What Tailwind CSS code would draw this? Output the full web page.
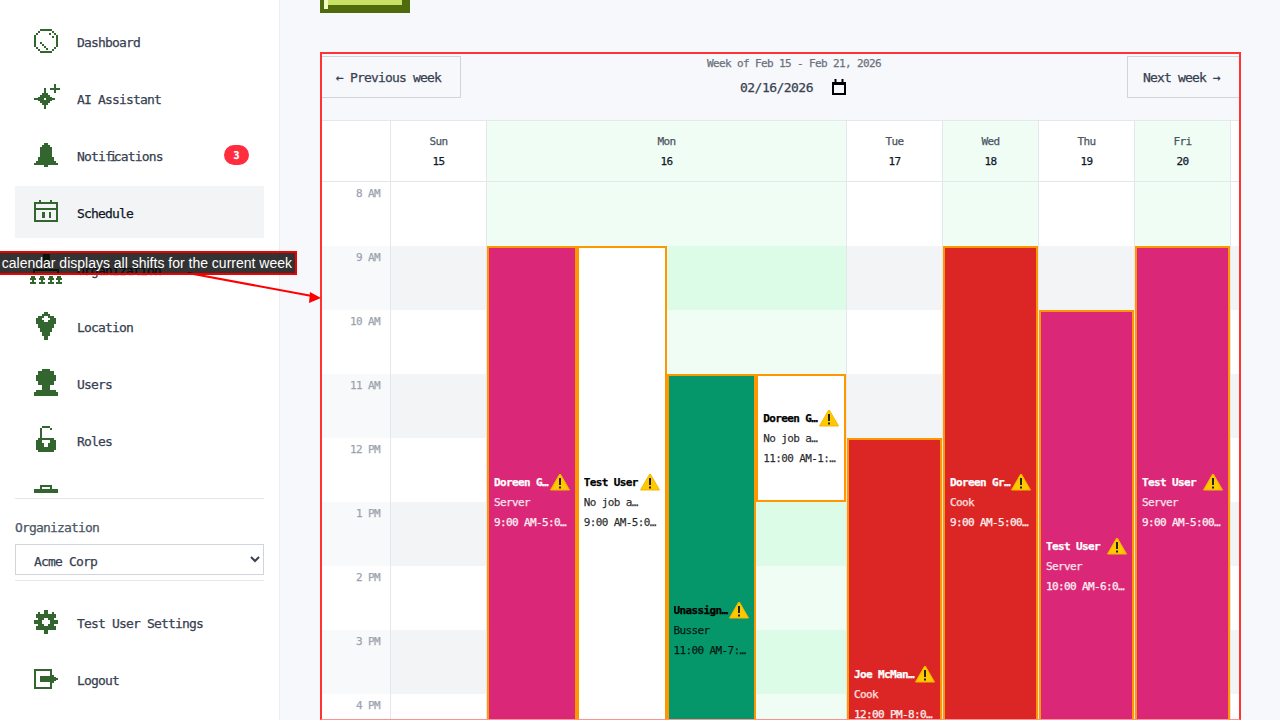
<!DOCTYPE html>
<html lang="en">
<head>
    <meta charset="UTF-8">
    <meta name="viewport" content="width=device-width, initial-scale=1.0">
    <title>Schedule</title>
    <script src="https://cdn.jsdelivr.net/npm/@tailwindcss/browser@4"></script>
</head>
<body class="relative flex w-[1280px] h-[720px] overflow-hidden bg-[#f7f8fb] font-['DejaVu_Sans_Mono',monospace] text-[13px] tracking-[-0.83px] text-[#374151] [-webkit-text-stroke:0.25px]">

    <!-- Sidebar -->
    <aside class="flex flex-col w-[280px] h-[720px] shrink-0 bg-white border-r border-[#eceef2] px-[15px]">
        <nav class="flex flex-col gap-[5px] h-[493px] shrink-0 overflow-hidden pt-[15px]">
            <a class="flex items-center h-[52px] shrink-0 pl-[19px] gap-[19px]">
                <svg class="w-6 h-6 shrink-0 overflow-visible text-[#33652f]" shape-rendering="crispEdges" viewBox="0 0 24 24" fill="currentColor"><path d="M6 0h12v2H6zM4 2h2v2H4zM18 2h2v2h-2zM2 4h2v2H2zM20 4h2v2h-2zM0 6h2v12H0zM22 6h2v12h-2zM2 18h2v2H2zM20 18h2v2h-2zM4 20h2v2H4zM18 20h2v2h-2zM6 22h12v2H6zM6 13h2v2H6zM8 15h2v2H8zM10 17h2v2h-2zM12 19h2v2h-2zM15 4h2v2h-2zM18 7h2v2h-2z"/></svg>
                <span class="pt-[4px]">Dashboard</span>
            </a>
            <a class="flex items-center h-[52px] shrink-0 pl-[19px] gap-[19px]">
                <svg class="w-6 h-6 shrink-0 overflow-visible text-[#33652f]" shape-rendering="crispEdges" viewBox="0 -1 24 24" fill="currentColor"><path d="M10 1h2v21h-2zM0 11h21v2H0zM8 6h6v12H8zM6 8h10v8H6zM4 10h14v4H4zM20 -3h2v9h-2zM16 1h10v2H16z"/><path fill="#fff" d="M10 11h2v2h-2z"/></svg>
                <span class="pt-[4px]">AI Assistant</span>
            </a>
            <a class="flex items-center h-[52px] shrink-0 pl-[19px] gap-[19px]">
                <svg class="w-6 h-6 shrink-0 overflow-visible text-[#33652f]" shape-rendering="crispEdges" viewBox="0 0 24 24" fill="currentColor"><path d="M10 0h4v2h-4zM8 2h8v2H8zM6 4h12v12H6zM4 14h16v6H4zM2 18h20v2H2zM0 20h24v2H0zM10 22h4v2h-4z"/></svg>
                <span class="pt-[4px]">Noti<span class="tracking-[-3.5px]">fi</span>cations</span>
                <span class="ml-auto mr-[15px] flex items-center justify-center w-[25px] h-5 rounded-full bg-[#ff2d3d] text-white text-[10px] tracking-normal font-bold">3</span>
            </a>
            <a class="flex items-center h-[52px] shrink-0 pl-[19px] gap-[19px] bg-[#f3f4f6] text-[#111827]">
                <svg class="w-6 h-6 shrink-0 overflow-visible text-[#33652f]" shape-rendering="crispEdges" viewBox="0 0 24 24" fill="currentColor"><path d="M5 0h2v4H5zM16 0h2v4h-2zM0 2h24v2H0zM0 2h2v20H0zM22 2h2v20h-2zM0 8h24v2H0zM0 20h24v2H0zM8 12h3v6H8zM15 12h2v6h-2z"/></svg>
                <span class="pt-[4px]">Schedule</span>
            </a>
            <a class="flex items-center h-[52px] shrink-0 pl-[15px] gap-[15px]">
                <svg class="w-8 h-8 shrink-0 overflow-visible text-[#33652f]" shape-rendering="crispEdges" viewBox="0 -1 32 32" fill="currentColor"><path d="M13 0h7v8h-7zM15 8h2v7h-2zM3 15h26v2H3zM3 15h2v6H3zM27 15h2v6h-2zM1 22h4v2H1zM0 24h6v2H0zM2 26h2v2H2zM0 28h6v2H0zM10 22h4v2h-4zM9 24h6v2H9zM11 26h2v2h-2zM9 28h6v2H9zM19 22h4v2h-4zM18 24h6v2h-6zM20 26h2v2h-2zM18 28h6v2h-6zM27 22h4v2h-4zM26 24h6v2h-6zM28 26h2v2h-2zM26 28h6v2h-6z"/></svg>
                <span class="pt-[4px]">Organization</span>
            </a>
            <a class="flex items-center h-[52px] shrink-0 pl-[19px] gap-[19px]">
                <svg class="w-6 h-6 shrink-0 overflow-visible text-[#33652f]" shape-rendering="crispEdges" viewBox="0 -1 24 24" fill="currentColor"><path d="M10 -3h4v2h-4zM8 -1h8v2H8zM4 1h16v2H4zM2 3h20v6H2zM4 9h16v4H4zM6 13h12v4H6zM8 17h8v4H8zM10 21h4v4h-4z"/><path fill="#fff" d="M10 1h4v2h-4zM8 3h8v2H8zM10 5h4v2h-4z"/></svg>
                <span class="pt-[4px]">Location</span>
            </a>
            <a class="flex items-center h-[52px] shrink-0 pl-[19px] gap-[19px]">
                <svg class="w-6 h-6 shrink-0 overflow-visible text-[#33652f]" shape-rendering="crispEdges" viewBox="0 -1 24 24" fill="currentColor"><path d="M8 -3h8v2H8zM4 -1h16v4H4zM2 3h20v6H2zM4 9h16v4H4zM8 13h8v5H8zM2 18h20v2H2zM0 20h24v4H0z"/></svg>
                <span class="pt-[4px]">Users</span>
            </a>
            <a class="flex items-center h-[52px] shrink-0 pl-[19px] gap-[19px]">
                <svg class="w-6 h-6 shrink-0 overflow-visible text-[#33652f]" shape-rendering="crispEdges" viewBox="0 -1 24 24" fill="currentColor"><path d="M8 -3h8v2H8zM6 -1h2v10H6zM16 -1h2v2h-2zM4 9h16v2H4zM2 11h20v10H2zM4 21h16v2H4z"/><path fill="#fff" d="M8 11h8v3H8zM10 14h4v4h-4z"/></svg>
                <span class="pt-[4px]">Roles</span>
            </a>
            <a class="flex items-center h-[52px] shrink-0 pl-[19px] gap-[19px]">
                <svg class="w-6 h-6 shrink-0 overflow-visible text-[#33652f]" shape-rendering="crispEdges" viewBox="0 0 24 24" fill="currentColor"><path d="M6 0h12v2H6zM6 2h2v2H6zM16 2h2v2h-2zM0 4h24v18H0z"/></svg>
            </a>
        </nav>

        <div class="mt-[5px] border-t border-[#e5e7eb] pt-[21px]">
            <label class="block text-[#4b5563] leading-[16px]">Organization</label>
            <select class="block w-full h-[31px] mt-[8px] pl-[14px] pt-[4px] bg-white border border-[#d1d5db] text-[#374151] text-[13px] tracking-[-0.83px]">
                <option>Acme Corp</option>
            </select>
        </div>

        <div class="flex flex-col gap-[5px] mt-[5px] border-t border-[#e5e7eb] pt-[16px]">
            <a class="flex items-center h-[52px] pl-[19px] gap-[19px]">
                <svg class="w-6 h-6 shrink-0 overflow-visible text-[#33652f]" shape-rendering="crispEdges" viewBox="0 0 24 24" fill="currentColor"><path d="M10 -1h4v4h-4zM4 1h2v2H4zM18 1h2v2h-2zM4 3h16v16H4zM2 3h4v4H2zM18 3h4v4h-4zM2 15h4v4H2zM18 15h4v4h-4zM0 9h24v4H0zM10 19h4v4h-4z"/><path fill="#fff" d="M10 7h4v2h-4zM8 9h8v4H8zM10 13h4v2h-4z"/></svg>
                <span class="pt-[2px]">Test User Settings</span>
            </a>
            <a class="flex items-center h-[52px] pl-[19px] gap-[19px]">
                <svg class="w-6 h-6 shrink-0 overflow-visible text-[#33652f]" shape-rendering="crispEdges" viewBox="0 0 24 24" fill="currentColor"><path d="M2 1h16v2H2zM0 1h2v20H0zM2 19h16v2H2zM16 3h2v3h-2zM16 16h2v3h-2zM6 8h12v6H6zM16 5h2v12h-2zM18 7h2v8h-2zM20 9h2v4h-2zM22 10h2v2h-2z"/></svg>
                <span class="pt-[2px]">Logout</span>
            </a>
        </div>
    </aside>

    <!-- Main -->
    <main class="flex-1 h-[720px] overflow-hidden pl-[40px]">
        <div class="relative w-[90px] h-[13px] mb-[39px] bg-[#4f6b0e]">
            <div class="absolute left-[4px] top-0 w-[78px] h-[5px] bg-[#c9e265]"></div>
            <div class="absolute left-[4px] top-0 w-[4px] h-[9px] bg-[#f0f9c0]"></div>
        </div>

        <section class="relative w-[921px] h-[668px] overflow-hidden pl-px">
            <!-- Week header -->
            <div class="flex justify-between items-start h-[68px] pt-[4px]">
                <button class="w-[140px] h-[42px] pl-[14px] pt-[2px] text-left border border-[#d1d5db]">← Previous week</button>
                <div class="flex flex-col items-center">
                    <p class="pt-[1px] text-[11px] tracking-[-0.62px] leading-[14px] text-[#6b7280]">Week of Feb 15 - Feb 21, 2026</p>
                    <div class="flex items-center gap-[19px] mt-[7px] h-[18px] pr-[2px] tracking-[-0.53px]">
                        <span class="pt-[2px]">02/16/2026</span>
                        <svg class="w-[14px] h-4 text-black" viewBox="0 0 14 16" fill="none" stroke="currentColor"><path stroke-width="2" d="M1 4h12v11H1z"/><path stroke-width="3" d="M0 4.500h14"/><path stroke-width="2" d="M3.500 0v3M10.500 0v3"/></svg>
                    </div>
                </div>
                <button class="w-[114px] h-[42px] pl-[15px] pt-[2px] text-left border border-[#d1d5db]">Next week →</button>
            </div>

            <!-- Day headers -->
            <div class="grid grid-cols-[70px_96px_360px_96px_96px_96px_96px_96px] w-[1006px] h-[62px] border-y border-[#e5e7eb] text-center text-[11px] tracking-[-0.62px] leading-[20px]">
                <div class="bg-white border-r border-[#e5e7eb]"></div>
                <div class="pt-[11px] bg-white border-r border-[#e5e7eb]"><p class="text-[#4b5563]">Sun</p><p class="text-[#111827]">15</p></div>
                <div class="pt-[11px] bg-[#f0fdf4] border-r border-[#e5e7eb]"><p class="text-[#4b5563]">Mon</p><p class="text-[#111827]">16</p></div>
                <div class="pt-[11px] bg-white border-r border-[#e5e7eb]"><p class="text-[#4b5563]">Tue</p><p class="text-[#111827]">17</p></div>
                <div class="pt-[11px] bg-[#f0fdf4] border-r border-[#e5e7eb]"><p class="text-[#4b5563]">Wed</p><p class="text-[#111827]">18</p></div>
                <div class="pt-[11px] bg-white border-r border-[#e5e7eb]"><p class="text-[#4b5563]">Thu</p><p class="text-[#111827]">19</p></div>
                <div class="pt-[11px] bg-[#f0fdf4] border-r border-[#e5e7eb]"><p class="text-[#4b5563]">Fri</p><p class="text-[#111827]">20</p></div>
                <div class="pt-[11px] bg-white border-r border-[#e5e7eb]"><p class="text-[#4b5563]">Sat</p><p class="text-[#111827]">21</p></div>
            </div>

            <!-- Hour grid -->
            <div class="grid grid-cols-[70px_96px_360px_96px_96px_96px_96px_96px] w-[1006px] h-[576px] text-[11px] tracking-[-0.62px]">
                <div class="grid grid-rows-[repeat(9,64px)] pr-[10px] pt-[5px] text-right leading-[14px] text-[#9ca3af] border-r border-[#e5e7eb] bg-[repeating-linear-gradient(#fff_0_64px,#f8f9fa_64px_128px)]">
                    <span>8 AM</span><span>9 AM</span><span>10 AM</span><span>11 AM</span><span>12 PM</span><span>1 PM</span><span>2 PM</span><span>3 PM</span><span>4 PM</span>
                </div>

                <!-- Sun -->
                <div class="border-r border-[#e5e7eb] bg-[repeating-linear-gradient(#fff_0_64px,#f3f4f6_64px_128px)]"></div>

                <!-- Mon -->
                <div class="relative border-r border-[#e5e7eb] bg-[repeating-linear-gradient(#f0fdf4_0_64px,#dcfce7_64px_128px)]">
                    <div class="absolute left-0 top-[64px] w-1/4 h-[512px] flex flex-col justify-center px-[5px] pt-[2px] border-2 border-[#ff9800] bg-[#db2777] text-white leading-5">
                        <div class="flex items-center font-bold"><span class="flex-1 min-w-0 truncate">Doreen Green</span><svg class="w-5 h-[19px] shrink-0" viewBox="0 1 20 19"><path fill="#ffc800" stroke="#f5b800" stroke-linejoin="round" d="M10 .500l9.500 16.500H.5z"/><path fill="#222" d="M9 5h2v7H9zM9 13.500h2v2H9z"/></svg></div>
                        <p class="truncate pr-[20px] text-white/80">Server</p>
                        <p class="truncate text-white/90">9:00 AM-5:00 PM</p>
                    </div>
                    <div class="absolute left-1/4 top-[64px] w-1/4 h-[512px] flex flex-col justify-center px-[5px] pt-[2px] border-2 border-[#ff9800] bg-white text-black leading-5">
                        <div class="flex items-center font-bold"><span class="flex-1 min-w-0 truncate">Test User</span><svg class="w-5 h-[19px] shrink-0" viewBox="0 1 20 19"><path fill="#ffc800" stroke="#f5b800" stroke-linejoin="round" d="M10 .500l9.500 16.500H.5z"/><path fill="#222" d="M9 5h2v7H9zM9 13.500h2v2H9z"/></svg></div>
                        <p class="truncate pr-[20px] text-black/80">No job assigned</p>
                        <p class="truncate text-black/80">9:00 AM-5:00 PM</p>
                    </div>
                    <div class="absolute left-1/2 top-[192px] w-1/4 h-[512px] flex flex-col justify-center px-[5px] pt-[2px] border-2 border-[#ff9800] bg-[#059669] text-black leading-5">
                        <div class="flex items-center font-bold"><span class="flex-1 min-w-0 truncate">Unassigned</span><svg class="w-5 h-[19px] shrink-0" viewBox="0 1 20 19"><path fill="#ffc800" stroke="#f5b800" stroke-linejoin="round" d="M10 .500l9.500 16.500H.5z"/><path fill="#222" d="M9 5h2v7H9zM9 13.500h2v2H9z"/></svg></div>
                        <p class="truncate pr-[20px] text-black/80">Busser</p>
                        <p class="truncate text-black/80">11:00 AM-7:00 PM</p>
                    </div>
                    <div class="absolute left-3/4 top-[192px] w-1/4 h-[128px] flex flex-col justify-center px-[5px] pt-[2px] border-2 border-[#ff9800] bg-white text-black leading-5">
                        <div class="flex items-center font-bold"><span class="flex-1 min-w-0 truncate">Doreen Green</span><svg class="w-5 h-[19px] shrink-0" viewBox="0 1 20 19"><path fill="#ffc800" stroke="#f5b800" stroke-linejoin="round" d="M10 .500l9.500 16.500H.5z"/><path fill="#222" d="M9 5h2v7H9zM9 13.500h2v2H9z"/></svg></div>
                        <p class="truncate pr-[20px] text-black/80">No job assigned</p>
                        <p class="truncate text-black/80">11:00 AM-1:00 PM</p>
                    </div>
                </div>

                <!-- Tue -->
                <div class="relative border-r border-[#e5e7eb] bg-[repeating-linear-gradient(#fff_0_64px,#f3f4f6_64px_128px)]">
                    <div class="absolute inset-x-0 top-[256px] h-[512px] flex flex-col justify-center px-[5px] pt-[2px] border-2 border-[#ff9800] bg-[#dc2626] text-white leading-5">
                        <div class="flex items-center font-bold"><span class="flex-1 min-w-0 truncate">Joe McManus</span><svg class="w-5 h-[19px] shrink-0" viewBox="0 1 20 19"><path fill="#ffc800" stroke="#f5b800" stroke-linejoin="round" d="M10 .500l9.500 16.500H.5z"/><path fill="#222" d="M9 5h2v7H9zM9 13.500h2v2H9z"/></svg></div>
                        <p class="truncate pr-[20px] text-white/80">Cook</p>
                        <p class="truncate text-white/90">12:00 PM-8:00 PM</p>
                    </div>
                </div>

                <!-- Wed -->
                <div class="relative border-r border-[#e5e7eb] bg-[repeating-linear-gradient(#f0fdf4_0_64px,#dcfce7_64px_128px)]">
                    <div class="absolute inset-x-0 top-[64px] h-[512px] flex flex-col justify-center px-[5px] pt-[2px] border-2 border-[#ff9800] bg-[#dc2626] text-white leading-5">
                        <div class="flex items-center font-bold"><span class="flex-1 min-w-0 truncate">Doreen Green</span><svg class="w-5 h-[19px] shrink-0" viewBox="0 1 20 19"><path fill="#ffc800" stroke="#f5b800" stroke-linejoin="round" d="M10 .500l9.500 16.500H.5z"/><path fill="#222" d="M9 5h2v7H9zM9 13.500h2v2H9z"/></svg></div>
                        <p class="truncate pr-[20px] text-white/80">Cook</p>
                        <p class="truncate text-white/90">9:00 AM-5:00 PM</p>
                    </div>
                </div>

                <!-- Thu -->
                <div class="relative border-r border-[#e5e7eb] bg-[repeating-linear-gradient(#fff_0_64px,#f3f4f6_64px_128px)]">
                    <div class="absolute inset-x-0 top-[128px] h-[512px] flex flex-col justify-center px-[5px] pt-[2px] border-2 border-[#ff9800] bg-[#db2777] text-white leading-5">
                        <div class="flex items-center font-bold"><span class="flex-1 min-w-0 truncate">Test User</span><svg class="w-5 h-[19px] shrink-0" viewBox="0 1 20 19"><path fill="#ffc800" stroke="#f5b800" stroke-linejoin="round" d="M10 .500l9.500 16.500H.5z"/><path fill="#222" d="M9 5h2v7H9zM9 13.500h2v2H9z"/></svg></div>
                        <p class="truncate pr-[20px] text-white/80">Server</p>
                        <p class="truncate text-white/90">10:00 AM-6:00 PM</p>
                    </div>
                </div>

                <!-- Fri -->
                <div class="relative border-r border-[#e5e7eb] bg-[repeating-linear-gradient(#f0fdf4_0_64px,#dcfce7_64px_128px)]">
                    <div class="absolute inset-x-0 top-[64px] h-[512px] flex flex-col justify-center px-[5px] pt-[2px] border-2 border-[#ff9800] bg-[#db2777] text-white leading-5">
                        <div class="flex items-center font-bold"><span class="flex-1 min-w-0 truncate">Test User</span><svg class="w-5 h-[19px] shrink-0" viewBox="0 1 20 19"><path fill="#ffc800" stroke="#f5b800" stroke-linejoin="round" d="M10 .500l9.500 16.500H.5z"/><path fill="#222" d="M9 5h2v7H9zM9 13.500h2v2H9z"/></svg></div>
                        <p class="truncate pr-[20px] text-white/80">Server</p>
                        <p class="truncate text-white/90">9:00 AM-5:00 PM</p>
                    </div>
                </div>

                <!-- Sat -->
                <div class="bg-[repeating-linear-gradient(#fff_0_64px,#f3f4f6_64px_128px)]"></div>
            </div>

            <!-- Annotation frame -->
            <div class="absolute inset-0 pointer-events-none border-x-2 border-t-2 border-b border-[#ff3333] border-b-[#ff9090]"></div>
        </section>
    </main>

    <!-- Annotation callout -->
    <svg class="absolute left-0 top-0 w-[1280px] h-[720px] pointer-events-none" viewBox="0 0 1280 720" fill="#ff0000" stroke="none">
        <path stroke="#ff0000" stroke-width="2" d="M188 273L312 296"/>
        <path d="M321 298L310 292L309 303z"/>
    </svg>
    <div class="absolute right-[983px] top-[251px] h-[24px] pl-[3px] pr-[3px] border-2 border-[#ee0000] bg-black/80 text-white whitespace-nowrap font-['Liberation_Sans',sans-serif] text-[14px] tracking-normal leading-[20px] [-webkit-text-stroke:0]">The calendar displays all shifts for the current week</div>

</body>
</html>
